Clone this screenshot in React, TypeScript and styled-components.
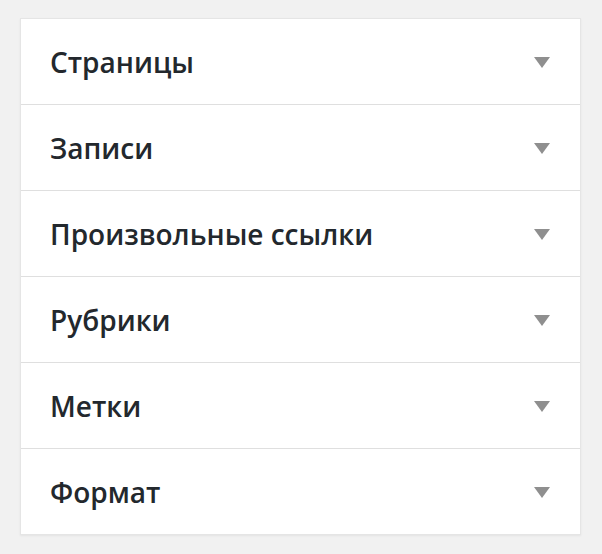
import styled, { createGlobalStyle } from "styled-components";

const GlobalStyle = createGlobalStyle`
  body {
    margin: 0;
    background: #f1f1f1;
    font-family: "Open Sans", "Noto Sans", sans-serif;
  }
`;

const Page = styled.div`
  padding: 18px 21px 20px 20px;
`;

const Panel = styled.ul`
  list-style: none;
  margin: 0;
  padding: 0;
  width: 561px;
  box-sizing: border-box;
  background: #fff;
  border: 1px solid #e5e5e5;
  box-shadow: 0 1px 2px rgba(0, 0, 0, 0.06);
`;

const Row = styled.li`
  display: flex;
  align-items: center;
  justify-content: space-between;
  height: 85px;
  padding: 0 30px 0 29px;
  border-bottom: 1px solid #dfdfdf;
  cursor: pointer;

  &:last-child {
    border-bottom: none;
  }
`;

const Title = styled.h3`
  margin: 0;
  font-size: 28px;
  font-weight: 600;
  color: #23282d;
  letter-spacing: 0;
`;

const Arrow = styled.span`
  width: 0;
  height: 0;
  margin-top: 2px;
  border-left: 8px solid transparent;
  border-right: 8px solid transparent;
  border-top: 11px solid #8f8f8f;
`;

const sections = [
  "Страницы",
  "Записи",
  "Произвольные ссылки",
  "Рубрики",
  "Метки",
  "Формат",
];

export default function App() {
  return (
    <>
      <GlobalStyle />
      <Page>
        <Panel>
          {sections.map((s) => (
            <Row key={s}>
              <Title>{s}</Title>
              <Arrow />
            </Row>
          ))}
        </Panel>
      </Page>
    </>
  );
}
